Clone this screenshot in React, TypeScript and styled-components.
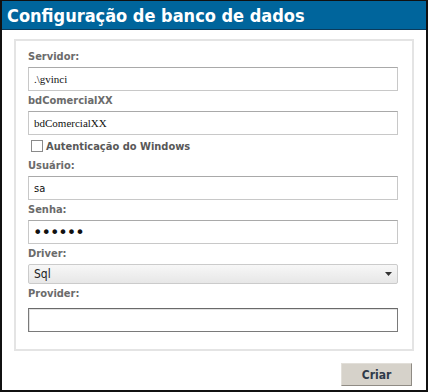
import styled, { createGlobalStyle } from "styled-components";

const Global = createGlobalStyle`
    html, body {
        margin: 0;
        padding: 0;
        background: #ffffff;
        overflow: hidden;
    }
`;

const Frame = styled.div`
    box-sizing: border-box;
    width: 428px;
    height: 392px;
    border: 2px solid #111111;
    border-top-width: 1px;
    display: flex;
    flex-direction: column;
    background: #ffffff;
`;

const Header = styled.div`
    flex-shrink: 0;
    height: 28px;
    background: #00659c;
    border-bottom: 1px solid #0b3b5c;
    display: flex;
    align-items: center;
    padding-left: 5px;
    color: #ffffff;
    font-family: "DejaVu Sans Condensed", "DejaVu Sans", sans-serif;
    font-weight: 700;
    font-size: 18px;
`;

const Body = styled.div`
    flex: 1;
    display: flex;
    flex-direction: column;
    padding: 9px 12px 0 12px;
`;

const Card = styled.div`
    border: 2px solid #e4e4e4;
    padding: 8px 14px 15px 12px;
    display: flex;
    flex-direction: column;
`;

const Label = styled.div<{ $gap?: number }>`
    font-family: "DejaVu Sans Condensed", "DejaVu Sans", sans-serif;
    font-weight: 700;
    font-size: 11px;
    color: #6b6b6b;
    height: 16px;
    line-height: 16px;
    margin-bottom: ${(p) => p.$gap ?? 2}px;
`;

const Input = styled.input<{ $strong?: boolean; $sans?: boolean }>`
    box-sizing: border-box;
    width: 370px;
    height: 24px;
    margin: 0 0 2px 0;
    padding: 0 5px;
    border: 1px solid ${(p) => (p.$strong ? "#7a7a7a" : "#c8c8c8")};
    border-top-color: ${(p) => (p.$strong ? "#6a6a6a" : "#a9a9a9")};
    box-shadow: ${(p) => (p.$strong ? "inset 1px 1px 0 #e2e2e2" : "none")};
    font-family: ${(p) =>
        p.$sans ? `"DejaVu Sans Condensed", "DejaVu Sans", sans-serif` : `"Liberation Serif", serif`};
    font-size: 11px;
    color: #111111;
    background: #ffffff;
    outline: none;
`;

const Password = styled(Input)`
    font-family: "DejaVu Sans", sans-serif;
    font-size: 16px;
    letter-spacing: -1px;
    padding-left: 4px;
`;

const CheckRow = styled.label`
    display: flex;
    align-items: center;
    gap: 3px;
    height: 18px;
    margin: 0 0 3px 0;
    font-family: "DejaVu Sans Condensed", "DejaVu Sans", sans-serif;
    font-weight: 700;
    font-size: 11px;
    color: #585858;
`;

const Box = styled.span`
    box-sizing: border-box;
    width: 12px;
    height: 12px;
    margin-left: 3px;
    border: 1px solid #8a8a8a;
    background: #ffffff;
`;

const Select = styled.div`
    box-sizing: border-box;
    width: 370px;
    height: 20px;
    margin-bottom: 2px;
    padding: 0 5px 0 5px;
    display: flex;
    align-items: center;
    justify-content: space-between;
    border: 1px solid #cbcbcb;
    border-radius: 2px;
    background: linear-gradient(#f7f7f7, #e7e7e7);
    font-family: "DejaVu Sans Condensed", "DejaVu Sans", sans-serif;
    font-size: 12px;
    color: #222222;
`;

const Footer = styled.div`
    display: flex;
    justify-content: flex-end;
    padding: 12px 2px 0 0;
`;

const Button = styled.button`
    box-sizing: border-box;
    width: 71px;
    height: 23px;
    padding: 0;
    border: 1px solid #e2dfd9;
    border-right-color: #8f8b84;
    border-bottom-color: #8f8b84;
    background: #d6d2ca;
    font-family: "DejaVu Sans Condensed", "DejaVu Sans", sans-serif;
    font-weight: 700;
    font-size: 12px;
    color: #2f3a4a;
`;

export default function App() {
    return (
        <>
            <Global />
            <Frame>
                <Header>Configuração de banco de dados</Header>
                <Body>
                    <Card>
                        <Label>Servidor:</Label>
                        <Input defaultValue=".\gvinci" />
                        <Label>bdComercialXX</Label>
                        <Input defaultValue="bdComercialXX" />
                        <CheckRow>
                            <Box />
                            Autenticação do Windows
                        </CheckRow>
                        <Label>Usuário:</Label>
                        <Input $sans defaultValue="sa" />
                        <Label>Senha:</Label>
                        <Password type="password" defaultValue="123456" />
                        <Label>Driver:</Label>
                        <Select>
                            <span>Sql</span>
                            <svg width="7" height="4" viewBox="0 0 7 4">
                                <path d="M0 0h7L3.5 4z" fill="#333" />
                            </svg>
                        </Select>
                        <Label $gap={6}>Provider:</Label>
                        <Input $strong />
                    </Card>
                    <Footer>
                        <Button>Criar</Button>
                    </Footer>
                </Body>
            </Frame>
        </>
    );
}
